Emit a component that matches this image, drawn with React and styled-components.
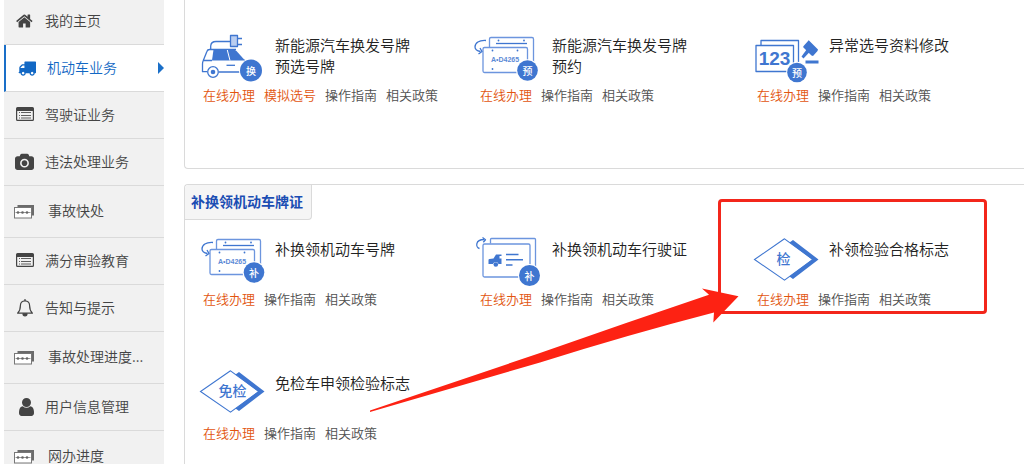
import React from "react";
import styled, { createGlobalStyle, css } from "styled-components";

const BLUE = "#3f76d0";

const GlobalStyle = createGlobalStyle`
  * { box-sizing: border-box; }
  body {
    margin: 0;
    background: #fff;
    font-family: "Noto Sans CJK SC", "Liberation Sans", sans-serif;
    font-weight: 350;
    color: #222;
  }
  a { color: inherit; text-decoration: none; }
  ul { list-style: none; margin: 0; padding: 0; }
`;

const Page = styled.div`
  display: flex;
  gap: 20px;
  height: 100vh;
  padding-left: 4px;
  overflow: hidden;
`;

/* ---------- side menu ---------- */

const SideNav = styled.nav`
  flex: 0 0 160px;
  margin-top: -2px;
`;

const MenuLink = styled.a`
  display: flex;
  align-items: center;
  gap: ${(p) => (p.$tall ? 14 : 11)}px;
  height: ${(p) => (p.$tall ? 52 : 47)}px;
  padding-left: 10px;
  border-bottom: 1px solid #dadada;
  background: #f1f1f1;
  color: #444;
  font-size: 14px;
  line-height: 20px;
  ${(p) =>
    p.$active &&
    css`
      border-left: 2px solid #1a6fc8;
      background: #fff;
      color: #1268c4;
    `}
`;

const MenuText = styled.span`
  padding-bottom: ${(p) => (p.$tall ? 4 : 2)}px;
`;

const IconSlot = styled.span`
  display: flex;
  justify-content: flex-end;
  width: 20px;
  svg { display: block; }
`;

const Pointer = styled.span`
  margin-left: auto;
  border: 6px solid transparent;
  border-left-color: #1a6fc8;
  border-right-width: 0;
`;

/* ---------- content ---------- */

const Main = styled.main`
  display: flex;
  flex: 1;
  flex-direction: column;
  gap: 15px;
  min-width: 0;
`;

const Panel = styled.section`
  border: 1px solid #dadada;
  border-right: 0;
  ${(p) =>
    p.$continued
      ? css`
          border-top: 0;
          border-bottom-left-radius: 4px;
          padding: 16px 0 18px;
        `
      : css`
          flex: 1 0 auto;
          border-bottom: 0;
          border-top-left-radius: 4px;
        `}
`;

const PanelTitle = styled.h2`
  width: max-content;
  height: 35px;
  margin: 0;
  padding: 0 8px 0 6px;
  border: solid #dadada;
  border-width: 0 1px 1px 0;
  border-radius: 4px 0 4px 0;
  background: #f5f5f5;
  color: #1b4db3;
  font-size: 14px;
  font-weight: 700;
  line-height: 32px;
`;

const CardGrid = styled.div`
  display: grid;
  grid-template-columns: repeat(3, minmax(0, 1fr));
  padding-left: 8px;
`;

const Card = styled.article`
  position: relative;
  height: 134px;
  padding: 7px 0 0 4px;
`;

const CardTop = styled.div`
  display: flex;
  gap: 10px;
  height: 64px;
  svg { flex: none; }
`;

const CardTitle = styled.h3`
  width: 140px;
  margin: 11px 0 0;
  font-size: 15px;
  font-weight: 350;
  line-height: 21px;
`;

const LinkRow = styled.div`
  display: flex;
  gap: 9px;
  padding-left: 6px;
  font-size: 13px;
  line-height: 16px;
  white-space: nowrap;
`;

const ActionLink = styled.a`
  color: ${(p) => (p.$hot ? "#e2550f" : "#505050")};
`;

/* ---------- markers over the cards ---------- */

const HighlightBox = styled.div`
  position: absolute;
  top: -21px;
  left: -29px;
  width: 269px;
  height: 115px;
  border: 3px solid #f3261b;
  border-radius: 4px;
  pointer-events: none;
`;

const ArrowMark = styled.svg`
  position: absolute;
  top: 66px;
  left: -379px;
  pointer-events: none;
`;

/* ---------- menu icons ---------- */

const HomeIcon = () => (
  <svg width="18" height="18" viewBox="0 0 1792 1792" fill="currentColor">
    <path d="M1408 992v480q0 26-19 45t-45 19h-384v-384h-256v384h-384q-26 0-45-19t-19-45v-480q0-1 .5-3t.5-3l575-474 575 474q1 2 1 6zm223-69l-62 74q-8 9-21 11h-3q-13 0-21-7l-692-577-692 577q-12 8-24 7-13-2-21-11l-62-74q-8-10-7-23.5t11-21.5l719-599q32-26 76-26t76 26l244 204v-195q0-14 9-23t23-9h192q14 0 23 9t9 23v408l219 182q10 8 11 21.5t-7 23.5z" />
  </svg>
);

const TruckIcon = () => (
  <svg width="18" height="18" viewBox="0 0 1792 1792" fill="currentColor">
    <path d="M640 1408q0-52-38-90t-90-38-90 38-38 90 38 90 90 38 90-38 38-90zm-384-512h384v-256h-158q-13 0-22 9l-195 195q-9 9-9 22v30zm1280 512q0-52-38-90t-90-38-90 38-38 90 38 90 90 38 90-38 38-90zm256-1088v1024q0 15-4 26.5t-13.5 18.5-16.5 11.5-23.5 6-22.5 2-25.5 0-22.5-.5q0 106-75 181t-181 75-181-75-75-181h-384q0 106-75 181t-181 75-181-75-75-181h-64q-3 0-22.5.5t-25.5 0-22.5-2-23.5-6-16.5-11.5-13.5-18.5-4-26.5q0-26 19-45t45-19v-320q0-8-.5-35t0-38 2.5-34.5 6.5-37 14-30.5 22.5-30l198-198q19-19 50.5-32t58.5-13h160v-192q0-26 19-45t45-19h1024q26 0 45 19t19 45z" />
  </svg>
);

const ListIcon = () => (
  <svg width="18" height="16" viewBox="0 0 18 16" fill="currentColor">
    <path
      fillRule="evenodd"
      d="M1.500 0h15A1.500 1.500 0 0 1 18 1.500v11a1.500 1.500 0 0 1-1.500 1.500h-15A1.500 1.500 0 0 1 0 12.500v-11A1.500 1.500 0 0 1 1.500 0zM1.200 4v8.300q0 .5.5.5h14.600q.5 0 .5-.5V4z"
    />
    <path d="M3 5h1v1H3zM5 5h10v1H5zM3 8h1v1H3zM5 8h10v1H5zM3 10.500h1v1H3zM5 10.500h10v1H5z" opacity="0.850" />
  </svg>
);

const CameraIcon = () => (
  <svg width="19" height="19" viewBox="0 0 1920 1792" fill="currentColor">
    <path d="M960 672q119 0 203.5 84.5t84.5 203.5-84.5 203.5-203.5 84.5-203.5-84.5-84.5-203.5 84.5-203.5 203.500-84.500zm704-416q106 0 181 75t75 181v896q0 106-75 181t-181 75h-1408q-106 0-181-75t-75-181v-896q0-106 75-181t181-75h224l51-136q19-49 69.500-84.500t103.500-35.500h512q53 0 103.500 35.500t69.500 84.500l51 136h224zm-704 1152q185 0 316.500-131.500t131.500-316.500-131.500-316.500-316.500-131.500-316.500 131.500-131.500 316.500 131.500 316.500 316.500 131.500z" />
  </svg>
);

const PlatesIcon = () => (
  <svg width="20" height="14" viewBox="0 0 20 14">
    <path d="M3.500 0H20v10.500h-2V2.500H3.500z" fill="#6b6b6b" />
    <rect x="0.500" y="2.500" width="17" height="10.500" fill="#fff" stroke="#777" />
    <path d="M1.500 7.500h15" stroke="#999" />
    <circle cx="4" cy="7.500" r="1.300" fill="#666" />
    <circle cx="8.500" cy="7.500" r="1.300" fill="#666" />
    <circle cx="13" cy="7.500" r="1.300" fill="#666" />
  </svg>
);

const BellIcon = () => (
  <svg width="18" height="18" viewBox="0 0 18 18" fill="none" stroke="currentColor" strokeWidth="1.200" strokeLinejoin="round">
    <path d="M9 1.800c-3 0-4.600 2-4.600 4.600C4.400 10 3.500 12.300 1.600 14.200h14.800c-1.900-1.900-2.800-4.200-2.800-7.800C13.600 3.800 12 1.800 9 1.800z" />
    <path d="M9 .3v1.500" strokeWidth="1.600" />
    <path d="M7 14.800a2 2 0 0 0 4 0z" fill="currentColor" />
  </svg>
);

const UserIcon = () => (
  <svg width="18" height="18" viewBox="0 128 1536 1536" preserveAspectRatio="xMaxYMid meet" fill="currentColor">
    <path d="M1536 1399q0 109-62.500 187t-150.500 78h-854q-88 0-150.500-78t-62.500-187q0-85 8.500-160.500t31.500-152 58.500-131 94-89 134.500-34.500q131 128 313 128t313-128q76 0 134.500 34.500t94 89 58.500 131 31.500 152 8.500 160.500zm-256-887q0 159-112.500 271.500t-271.500 112.500-271.500-112.500-112.500-271.500 112.500-271.500 271.500-112.500 271.500 112.500 112.500 271.500z" />
  </svg>
);

/* ---------- service pictures ---------- */

const Picture = ({ children }) => (
  <svg width="68" height="64" viewBox="0 0 68 64" fill="none" stroke={BLUE} strokeWidth="1.300" strokeLinejoin="round" aria-hidden="true">
    {children}
  </svg>
);

const Badge = ({ x, y, r = 10.500, label }) => (
  <g stroke="none">
    <circle cx={x} cy={y} r={r + 1} fill="#fff" />
    <circle cx={x} cy={y} r={r} fill={BLUE} />
    <text x={x} y={y + 4} fill="#fff" fontSize="10" fontWeight="500" textAnchor="middle">
      {label}
    </text>
  </g>
);

const CarPicture = () => (
  <Picture>
    <path d="M33 18.500H19q-5 0-5.300 4.500v3.500" />
    <rect x="33.500" y="12.500" width="7" height="11" fill="#b9cdf0" />
    <path d="M40.500 15.500h4.500M40.500 21.500h4.500" strokeWidth="1.600" />
    <path d="M39 26.500H12.500q-2 0-2.600 2L6.500 37q-1 2-1 4v7.700H10M22 49h23M5.800 37.500H15M47 37l5 2" />
    <path d="M16.500 26.500H36q2 0 3.500 1.500l8.500 9.500H15z" fill={BLUE} stroke="none" />
    <path d="M30.300 27l2.700 10.500" stroke="#fff" strokeWidth="1" />
    <path d="M29.500 42.300h8.500" />
    <circle cx="16" cy="49" r="5.300" />
    <circle cx="16" cy="49" r="2.300" fill={BLUE} stroke="none" />
    <Badge x={54} y={47.500} r={11} label="换" />
  </Picture>
);

const PlatePicture = ({ label, dx = 0, dy = 0 }) => (
  <Picture>
    <g transform={`translate(${dx} ${dy})`}>
      <path d="M15.500 24v-8q0-1.500 1.500-1.500h41q1.500 0 1.500 1.500v23" stroke="#6c95de" />
      <path d="M22 20.500h31" />
      <rect x="9" y="24.500" width="44.500" height="25" rx="1.500" stroke="#6c95de" />
      <g fill={BLUE} stroke="none">
        <circle cx="24.500" cy="17.500" r="0.900" />
        <circle cx="50" cy="17.500" r="0.900" />
        <circle cx="18.500" cy="27.500" r="0.900" />
        <circle cx="43.500" cy="27.500" r="0.900" />
        <circle cx="18.500" cy="46" r="0.900" />
        <text x="31" y="39" fontFamily="Liberation Sans, sans-serif" fontSize="7" fontWeight="700" textAnchor="middle" opacity="0.850">
          A•D4265
        </text>
      </g>
      <path d="M12 17.500C5 17 1 20 1 24q0 3.500 5.500 4.500" />
      <path d="M4.500 31l3.500-2.500-2-3.500" />
      <Badge x={53.500 - dx / 8} y={47.500} r={10.300} label={label} />
    </g>
  </Picture>
);

const NumberPicture = () => (
  <Picture>
    <path d="M10 22v-4.500h37.500V39" />
    <rect x="5" y="22.500" width="37.500" height="26" />
    <text x="23.500" y="42" fill={BLUE} stroke="none" fontFamily="Liberation Sans, sans-serif" fontSize="19" fontWeight="700" textAnchor="middle">
      123
    </text>
    <g fill={BLUE} stroke="none">
      <path d="M57.500 17l9.500 9.500-.5 1.500-4.500 5-1.500-.5-8.500-8.500 1-1.500 4.500-5z" />
      <path d="M56 26l3 2.500-6.500 7-2-2z" />
      <rect x="54.500" y="37.500" width="13" height="3" />
    </g>
    <Badge x={46} y={49.500} r={9.800} label="预" />
  </Picture>
);

const LicencePicture = () => (
  <Picture>
    <path d="M16.500 16.500v-4q0-1 1-1h43q1 0 1 1V40" stroke="#6c95de" />
    <rect x="9" y="17" width="47" height="33" rx="1.500" stroke="#6c95de" />
    <path d="M5.500 21.500C1.500 20.500 1 12.500 10 12.500M8.500 10.500l3 2.200-2.200 2.500" />
    <g fill={BLUE} stroke="none">
      <path d="M14.500 33q0-1 1-1l4-.5 2.500-4h5.500v1.500h-2v2.500h2v5.500h-3q-.5-2-2.700-2t-2.800 2h-4.500z" />
      <circle cx="21.800" cy="37.500" r="2.300" />
    </g>
    <path d="M32 27.500h12.500M32 32.800h17M32 38h6.500" strokeWidth="1.600" />
    <Badge x={55.500} y={48.500} label="补" />
  </Picture>
);

const DiamondPicture = ({ label, x = 35, dy = 0 }) => (
  <Picture>
    <g transform={`translate(0 ${dy})`}>
      <path d="M33.500 9.800L3.500 30.500l30 20.700L62 30.500z" strokeWidth="1.100" strokeLinejoin="miter" />
      <path d="M42 11l25.500 19.500L42 50l-3.500-2.500L61 30.500 38.500 13.500z" fill={BLUE} stroke="none" />
      <text x={x} y="35" fill={BLUE} stroke="none" fontSize="14" fontWeight="500" textAnchor="middle">
        {label}
      </text>
    </g>
  </Picture>
);

/* ---------- data ---------- */

const MENU = [
  { label: "我的主页", icon: <HomeIcon /> },
  { label: "机动车业务", icon: <TruckIcon />, active: true },
  { label: "驾驶证业务", icon: <ListIcon /> },
  { label: "违法处理业务", icon: <CameraIcon /> },
  { label: "事故快处", icon: <PlatesIcon />, tall: true },
  { label: "满分审验教育", icon: <ListIcon /> },
  { label: "告知与提示", icon: <BellIcon /> },
  { label: "事故处理进度...", icon: <PlatesIcon />, tall: true },
  { label: "用户信息管理", icon: <UserIcon /> },
  { label: "网办进度", icon: <PlatesIcon />, tall: true },
];

const NEW_PLATE_SERVICES = [
  { title: "新能源汽车换发号牌预选号牌", picture: <CarPicture />, trial: true },
  { title: "新能源汽车换发号牌预约", picture: <PlatePicture label="预" /> },
  { title: "异常选号资料修改", picture: <NumberPicture /> },
];

const REISSUE_SERVICES = [
  { title: "补换领机动车号牌", picture: <PlatePicture label="补" dx={4} dy={-2} /> },
  { title: "补换领机动车行驶证", picture: <LicencePicture /> },
  { title: "补领检验合格标志", picture: <DiamondPicture label="检" x={32.500} dy={2} />, marked: true },
  { title: "免检车申领检验标志", picture: <DiamondPicture label="免检" x={35.500} /> },
];

const Marker = () => (
  <>
    <HighlightBox />
    <ArrowMark width="372" height="130" viewBox="368 286 372 130" aria-hidden="true">
      <path
        d="M370 410.500L540 353Q625 323 709 294.700L702 288.500 738.500 296.300 713.300 322.500 714 312.500Q627 335 540 362.500L370 412z"
        fill="#fd2213"
      />
    </ArrowMark>
  </>
);

const Service = ({ title, picture, trial, marked }) => (
  <Card>
    <CardTop>
      {picture}
      <CardTitle>{title}</CardTitle>
    </CardTop>
    <LinkRow>
      <ActionLink href="#apply" $hot>在线办理</ActionLink>
      {trial && <ActionLink href="#trial" $hot>模拟选号</ActionLink>}
      <ActionLink href="#guide">操作指南</ActionLink>
      <ActionLink href="#policy">相关政策</ActionLink>
    </LinkRow>
    {marked && <Marker />}
  </Card>
);

export default function App() {
  return (
    <>
      <GlobalStyle />
      <Page>
        <SideNav>
          <ul>
            {MENU.map((m) => (
              <li key={m.label}>
                <MenuLink href="#menu" $active={m.active} $tall={m.tall}>
                  <IconSlot>{m.icon}</IconSlot>
                  <MenuText $tall={m.tall}>{m.label}</MenuText>
                  {m.active && <Pointer />}
                </MenuLink>
              </li>
            ))}
          </ul>
        </SideNav>
        <Main>
          <Panel $continued>
            <CardGrid>
              {NEW_PLATE_SERVICES.map((s) => (
                <Service key={s.title} {...s} />
              ))}
            </CardGrid>
          </Panel>
          <Panel>
            <PanelTitle>补换领机动车牌证</PanelTitle>
            <CardGrid>
              {REISSUE_SERVICES.map((s) => (
                <Service key={s.title} {...s} />
              ))}
            </CardGrid>
          </Panel>
        </Main>
      </Page>
    </>
  );
}
